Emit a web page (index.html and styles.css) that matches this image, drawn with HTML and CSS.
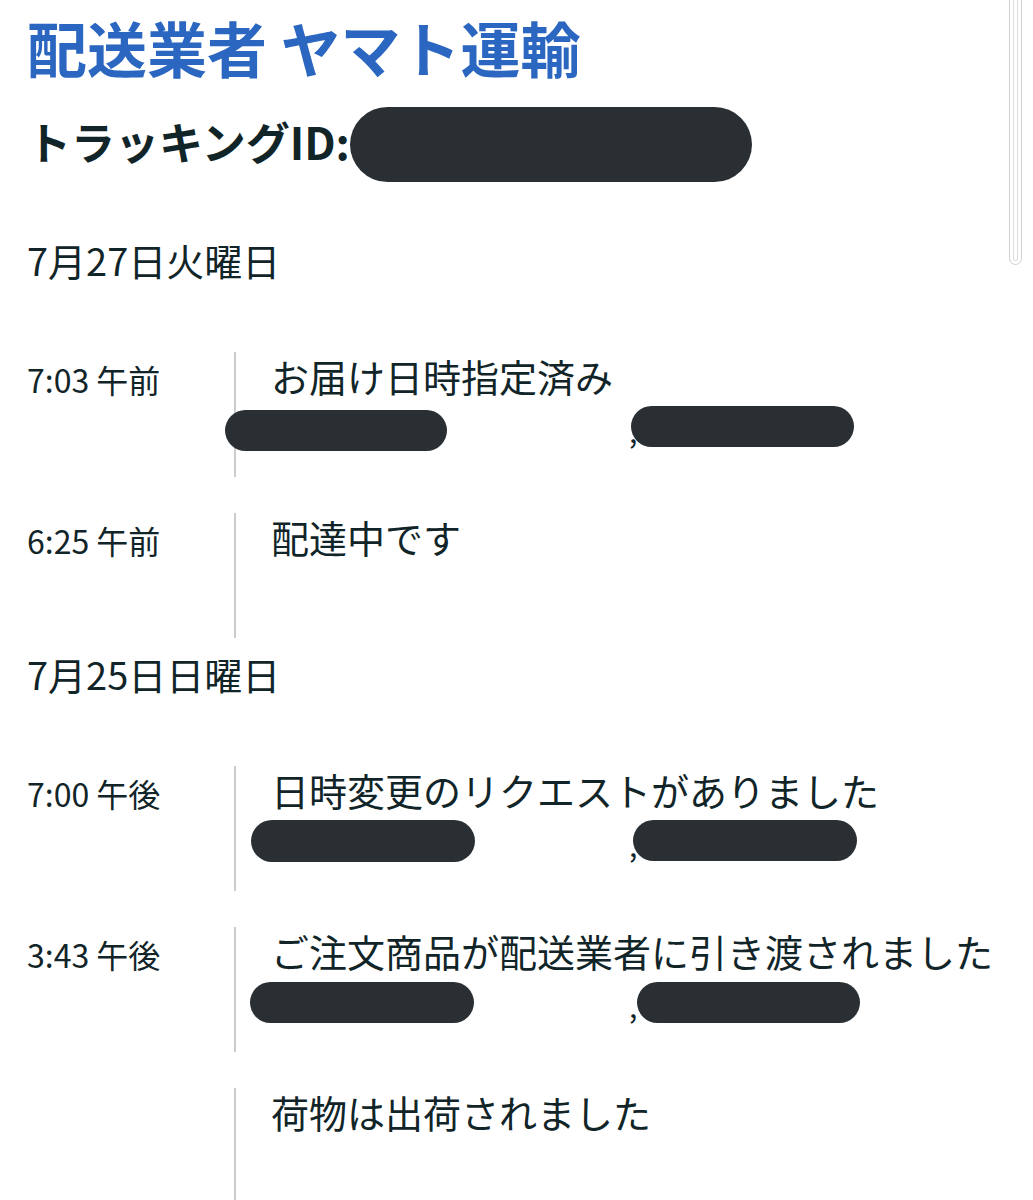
FILE: index.html
```html
<!DOCTYPE html>
<html lang="ja">
<head>
<meta charset="utf-8">
<link rel="stylesheet" href="styles.css">
</head>
<body>
<div class="page">
  <h1 class="carrier">配送業者 ヤマト運輸</h1>
  <div class="tracking">トラッキングID:<span class="redact redact-id"></span></div>

  <section class="day">
    <h2 class="date">7月27日火曜日</h2>
    <div class="events">
      <div class="event">
        <div class="time">7:03 午前</div>
        <div class="detail">
          <div class="status">お届け日時指定済み</div>
          <div class="addr"><span class="comma">,</span><span class="redact p-a1"></span><span class="redact p-b1"></span></div>
        </div>
      </div>
      <div class="event">
        <div class="time">6:25 午前</div>
        <div class="detail">
          <div class="status">配達中です</div>
        </div>
      </div>
    </div>
  </section>

  <section class="day">
    <h2 class="date">7月25日日曜日</h2>
    <div class="events">
      <div class="event">
        <div class="time">7:00 午後</div>
        <div class="detail">
          <div class="status">日時変更のリクエストがありました</div>
          <div class="addr"><span class="comma">,</span><span class="redact p-a3"></span><span class="redact p-b3"></span></div>
        </div>
      </div>
      <div class="event">
        <div class="time">3:43 午後</div>
        <div class="detail">
          <div class="status">ご注文商品が配送業者に引き渡されました</div>
          <div class="addr"><span class="comma">,</span><span class="redact p-a4"></span><span class="redact p-b4"></span></div>
        </div>
      </div>
      <div class="event event-last">
        <div class="time"></div>
        <div class="detail">
          <div class="status">荷物は出荷されました</div>
        </div>
      </div>
    </div>
  </section>
</div>
<div class="scrollbar"><div class="scrollbar-inner"></div></div>
</body>
</html>
```

FILE: styles.css
```css
html, body {
  margin: 0;
  padding: 0;
  background: #ffffff;
  overflow: hidden;
}
body {
  font-family: "Noto Sans CJK JP", "Noto Sans", sans-serif;
  color: #112529;
  width: 1033px;
  height: 1200px;
  position: relative;
}
.page {
  padding: 12px 0 0 27px;
}
.carrier {
  margin: 0;
  font-size: 60px;
  line-height: 70px;
  font-weight: 700;
  color: #2b66c0;
  letter-spacing: 0;
}
.tracking {
  margin-top: 29px;
  font-size: 44px;
  line-height: 60px;
  font-weight: 700;
  position: relative;
}
.redact {
  display: block;
  position: absolute;
  background: #2a2f33;
  border-radius: 22px;
}
.redact-id {
  left: 323px;
  top: -4px;
  width: 402px;
  height: 75px;
  border-radius: 38px;
}
.day {
  margin-top: 12px;
}
.day:first-of-type {
  margin-top: 65px;
}
.date {
  margin: 0 0 68px 0;
  font-size: 38px;
  line-height: 48px;
  font-weight: 400;
}
.events {
  display: flex;
  flex-direction: column;
  gap: 36px;
}
.event {
  display: grid;
  grid-template-columns: 207px 1fr;
  align-items: start;
}
.time {
  font-size: 32px;
  line-height: 48px;
  padding-top: 3px;
}
.detail {
  border-left: 2px solid #cbcbcb;
  height: 125px;
  box-sizing: border-box;
  padding-left: 35px;
  display: flex;
  flex-direction: column;
}
.event-last .detail {
  height: 200px;
}
.status {
  font-size: 38px;
  line-height: 48px;
  white-space: nowrap;
}
.addr {
  position: relative;
  height: 52px;
  font-size: 30px;
  line-height: 52px;
}
.comma {
  position: absolute;
  left: 358px;
  top: 4px;
}
.p-a1 { left: -46px; top: 10px; width: 222px; height: 41px; }
.p-b1 { left: 360px; top: 6px; width: 223px; height: 41px; }
.p-a3 { left: -20px; top: 6px; width: 224px; height: 42px; }
.p-b3 { left: 362px; top: 6px; width: 224px; height: 41px; }
.p-a4 { left: -21px; top: 7px; width: 224px; height: 41px; }
.p-b4 { left: 366px; top: 7px; width: 223px; height: 41px; }
.scrollbar {
  position: absolute;
  left: 1009px;
  top: -8px;
  width: 13px;
  height: 273px;
  box-sizing: border-box;
  border: 1px solid #cfcfcf;
  border-radius: 0 0 7px 7px;
  padding: 0 3px 3px 3px;
}
.scrollbar-inner {
  height: 100%;
  box-sizing: border-box;
  border: 1px solid #dcdcdc;
  border-top: none;
  border-radius: 0 0 4px 4px;
}
```
